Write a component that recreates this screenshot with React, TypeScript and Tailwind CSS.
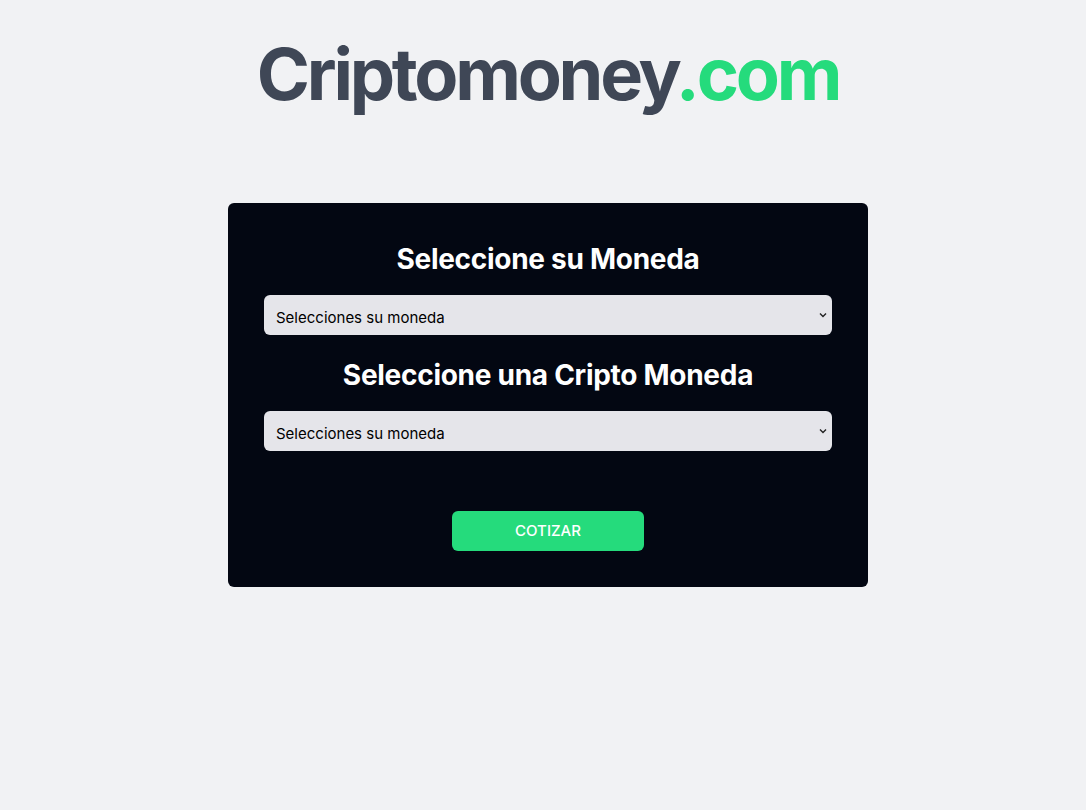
import { useState } from "react";

const monedas = [
  { id: "USD", nombre: "Dolar de Estados Unidos" },
  { id: "MXN", nombre: "Peso Mexicano" },
  { id: "EUR", nombre: "Euro" },
  { id: "GBP", nombre: "Libra Esterlina" },
];

const Chevron = () => (
  <svg
    className="pointer-events-none absolute right-[5px] top-1/2 -translate-y-1/2"
    width="8"
    height="6"
    viewBox="0 0 8 6"
    fill="none"
  >
    <path d="M1 1.5 L4 4.5 L7 1.5" stroke="#222" strokeWidth="1.4" />
  </svg>
);

const Select = ({
  value,
  onChange,
}: {
  value: string;
  onChange: (v: string) => void;
}) => (
  <div className="relative">
    <select
      value={value}
      onChange={(e) => onChange(e.target.value)}
      className="h-10 w-full appearance-none rounded-md bg-[#e5e5ea] pl-3 pr-6 pt-[6px] text-[15px] text-black outline-none"
    >
      <option value="">Selecciones su moneda</option>
      {monedas.map((m) => (
        <option key={m.id} value={m.id}>
          {m.nombre}
        </option>
      ))}
    </select>
    <Chevron />
  </div>
);

export default function App() {
  const [moneda, setMoneda] = useState("");
  const [cripto, setCripto] = useState("");

  return (
    <div
      className="min-h-[810px] bg-[#f1f2f4] pt-[38px] pl-[10px]"
      style={{ fontFamily: "Inter, 'Noto Sans', sans-serif" }}
    >
      <h1 className="text-center text-7xl leading-none font-bold tracking-[-0.045em] text-[#3f4756]">
        Criptomoney<span className="text-[#25db7c]">.com</span>
      </h1>

      <form
        onSubmit={(e) => e.preventDefault()}
        className="mx-auto mt-[93px] w-[640px] rounded-md bg-[#030712] px-9 py-9"
      >
        <h2 className="mt-[2px] mb-[18px] text-center text-[28px] leading-9 font-bold tracking-[-0.01em] text-white">
          Seleccione su Moneda
        </h2>
        <Select value={moneda} onChange={setMoneda} />

        <h2 className="mt-[22px] mb-[18px] text-center text-[28px] leading-9 font-bold tracking-[-0.01em] text-white">
          Seleccione una Cripto Moneda
        </h2>
        <Select value={cripto} onChange={setCripto} />

        <div className="mt-[60px] flex justify-center">
          <button
            type="submit"
            className="h-10 w-48 rounded-md bg-[#25db7c] pt-[1px] text-[15px] font-medium uppercase text-white"
          >
            Cotizar
          </button>
        </div>
      </form>
    </div>
  );
}
